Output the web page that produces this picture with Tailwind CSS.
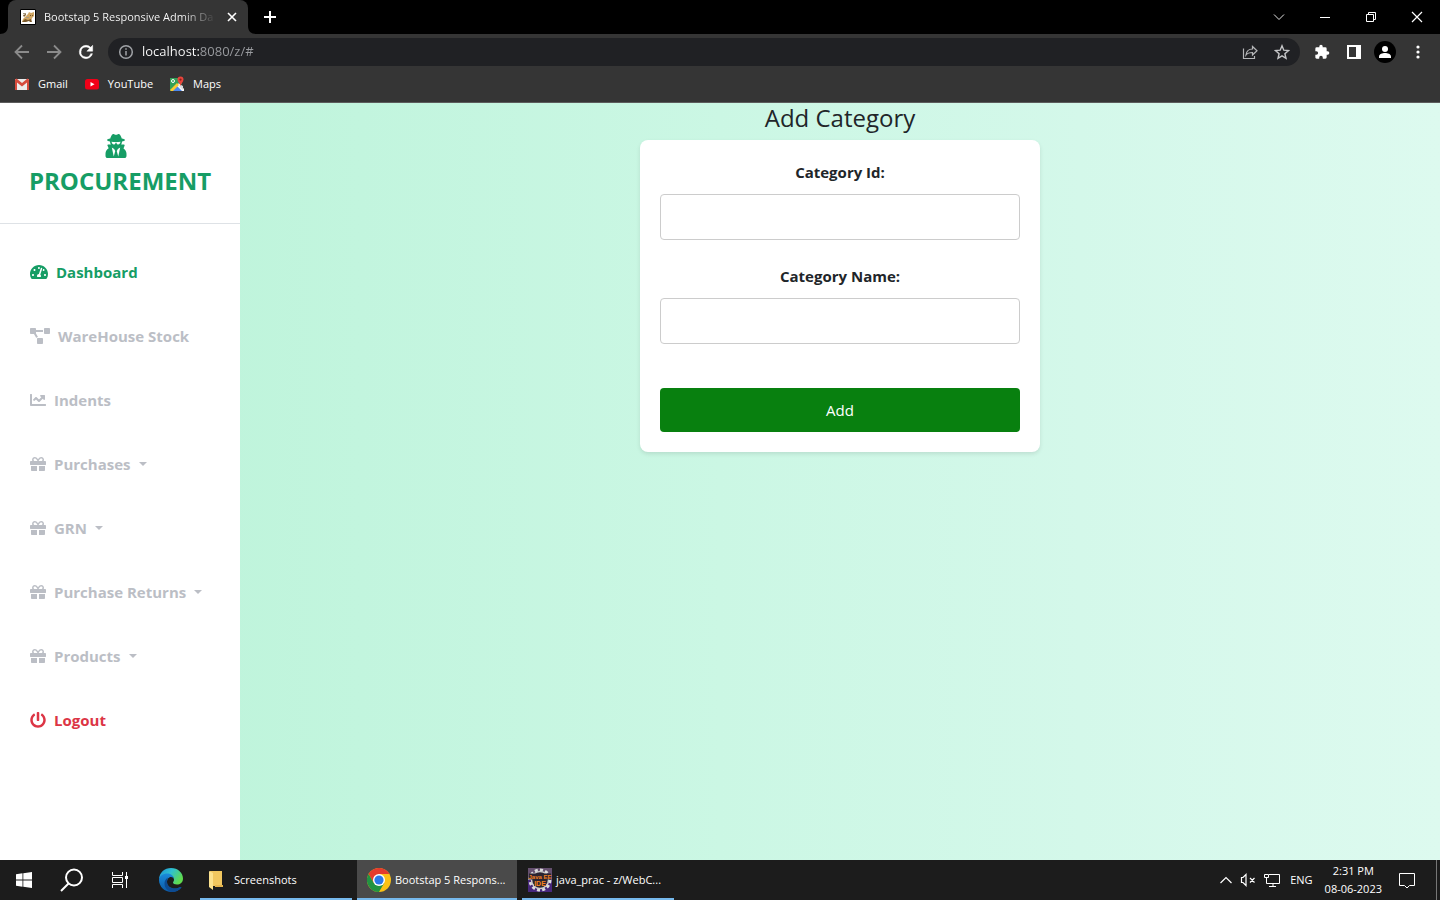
<!DOCTYPE html>
<html lang="en">
<head>
<meta charset="utf-8">
<meta name="viewport" content="width=device-width, initial-scale=1">
<title>Bootstap 5 Responsive Admin Dashboard</title>
<script src="https://cdn.jsdelivr.net/npm/@tailwindcss/browser@4"></script>
</head>
<body class="min-h-screen flex flex-col bg-white font-['Segoe_UI','Open_Sans',sans-serif] text-[#212529]">

<svg class="hidden" aria-hidden="true">
  <symbol id="gift" viewBox="0 0 512 512"><path fill="currentColor" d="M32 448c0 17.700 14.300 32 32 32h160V320H32v128zm256 32h160c17.700 0 32-14.300 32-32V320H288v160zm192-320h-42.100c6.200-12.100 10.100-25.500 10.100-40 0-48.500-39.500-88-88-88-41.600 0-68.500 21.300-103 68.300-34.500-47-61.400-68.300-103-68.300-48.500 0-88 39.500-88 88 0 14.500 3.800 27.900 10.100 40H32c-17.700 0-32 14.300-32 32v80c0 8.800 7.200 16 16 16h480c8.800 0 16-7.200 16-16v-80c0-17.700-14.300-32-32-32zm-326.100 0c-22.100 0-40-17.900-40-40s17.900-40 40-40c19.900 0 34.600 3.300 86.100 80h-86.100zm206.100 0h-86.100c51.400-76.500 65.700-80 86.100-80 22.100 0 40 17.900 40 40s-17.900 40-40 40z"/></symbol>
  <symbol id="caret" viewBox="0 0 8 4"><path fill="currentColor" d="M0 0h8L4 4z"/></symbol>
</svg>

<!-- Browser window -->
<header class="text-xs text-white bg-[#353535] border-b border-[#5c5c5c]">
  <div class="h-[34px] bg-black flex items-center justify-between">
    <div class="flex items-center h-full">
      <svg class="w-2 h-2 self-end" viewBox="0 0 8 8"><path fill="#353535" d="M8 0v8H0c5 0 8-3 8-8z"/></svg>
      <div class="w-60 h-full bg-[#353535] rounded-t-lg flex items-center pl-3 pr-2">
        <svg class="w-4 h-4 shrink-0" viewBox="0 0 16 16"><path fill="#fff" stroke="#000" d="M.5.5h15v15H.5z"/><path fill="#d2a763" d="M8 5l1-2 2 1 3-1v4l-2 2-1 3H6l-3 1H2l1-3 2-2z"/><path fill="#7b5a2c" d="M2 13l3-3 3 1 3-1 1 3h-2l-1-1-3 1zM10 6h1v1h-1zM12 6h1v1h-1zM3 6l3-1v1L4 8z"/><path fill="#a89b84" d="M3 4h3v1H3zM6 8h3v1H6z"/></svg>
        <span class="ml-2 w-44 whitespace-nowrap text-[11px] bg-linear-to-r from-white from-80% to-transparent bg-clip-text text-transparent">Bootstap 5 Responsive Admin Da</span>
        <button aria-label="Close tab" class="ml-2 shrink-0"><svg class="w-4 h-4" viewBox="0 0 16 16" stroke="#fff" stroke-width="1.600"><path d="M4 4l8 8M12 4l-8 8"/></svg></button>
      </div>
      <svg class="w-2 h-2 self-end" viewBox="0 0 8 8"><path fill="#353535" d="M0 0v8h8C3 8 0 5 0 0z"/></svg>
      <button aria-label="New tab" class="ml-1.5"><svg class="w-4 h-4" viewBox="0 0 16 16" stroke="#fff" stroke-width="2"><path d="M8 2v12M2 8h12"/></svg></button>
    </div>
    <div class="flex items-center h-7">
      <button aria-label="Search tabs" class="w-[46px] flex justify-center"><svg class="w-3 h-3" viewBox="0 0 12 12" fill="none" stroke="#e4e4e4"><path d="M1 3.500l5 5 5-5"/></svg></button>
      <button aria-label="Minimize" class="w-[46px] flex justify-center"><svg class="w-3 h-3" viewBox="0 0 12 12" stroke="#fff"><path d="M1 6.500h10"/></svg></button>
      <button aria-label="Restore" class="w-[46px] flex justify-center"><svg class="w-3 h-3" viewBox="0 0 12 12" fill="none" stroke="#fff"><path d="M1.500 3.500h7v7h-7zM3.500 3.500v-2h7v7h-2"/></svg></button>
      <button aria-label="Close" class="w-[46px] flex justify-center"><svg class="w-3 h-3" viewBox="0 0 12 12" stroke="#fff" stroke-width="1.200"><path d="M1 1l10 10M11 1L1 11"/></svg></button>
    </div>
  </div>

  <div class="h-9 flex items-center pl-3 pr-3.5">
    <div class="flex gap-3">
      <button aria-label="Back"><svg class="w-5 h-5" viewBox="0 0 20 20" fill="none" stroke="#8b8b8b" stroke-width="1.800"><path d="M17 10H4M10 3.500L3.500 10l6.500 6.500"/></svg></button>
      <button aria-label="Forward"><svg class="w-5 h-5" viewBox="0 0 20 20" fill="none" stroke="#8b8b8b" stroke-width="1.800"><path d="M3 10h13M10 3.500l6.500 6.500-6.500 6.500"/></svg></button>
      <button aria-label="Reload"><svg class="w-5 h-5" viewBox="0 0 24 24" fill="#fff" stroke="#fff" stroke-width=".6"><path d="M17.650 6.350A7.960 7.960 0 0 0 12 4a8 8 0 1 0 7.730 10h-2.080A6 6 0 1 1 12 6c1.660 0 3.140.69 4.220 1.780L13 11h7V4z"/></svg></button>
    </div>
    <div class="ml-3 flex-1 h-7 rounded-full bg-[#202124] flex items-center pl-2.5 pr-2.5">
      <svg class="w-4 h-4" viewBox="0 0 16 16" fill="none" stroke="#a0a3a7" stroke-width="1.500"><circle cx="8" cy="8" r="6.300"/><path d="M8 7v4.500M8 4.300v1.500"/></svg>
      <input aria-label="Address" type="text" value="localhost:8080/z/#" class="ml-2 flex-1 text-[13px] outline-none bg-[linear-gradient(to_right,#fff_58px,#9a9ca0_58px)] bg-clip-text text-transparent">
      <button aria-label="Share"><svg class="w-4 h-4" viewBox="0 0 16 16" fill="none" stroke="#b5b6b8" stroke-width="1.200"><path d="M1.500 4.500v10h11v-2.500M4 11c.5-4 3-6 6.500-6V2.500L15 6.800 10.500 11V8.500C8 8.500 5.500 9 4 11z"/></svg></button>
      <button aria-label="Bookmark this page" class="ml-4"><svg class="w-4 h-4" viewBox="0 0 16 16" fill="none" stroke="#c4c5c7" stroke-width="1.400"><path d="M8 1.800l1.800 4.400 4.700.4-3.600 3.100 1.100 4.600L8 11.800l-4 2.500 1.100-4.600L1.500 6.600l4.700-.4z"/></svg></button>
    </div>
    <div class="flex items-center ml-3.5">
      <button aria-label="Extensions"><svg class="w-4 h-4" viewBox="0 0 24 24" fill="#fff"><path d="M20.500 11H19V7a2 2 0 0 0-2-2h-4V3.500a2.500 2.500 0 0 0-5 0V5H4a2 2 0 0 0-2 2v3.800h1.500a2.700 2.700 0 0 1 0 5.400H2V20c0 1.100.9 2 2 2h3.800v-1.500a2.700 2.700 0 0 1 5.400 0V22H17a2 2 0 0 0 2-2v-4h1.500a2.500 2.500 0 0 0 0-5z"/></svg></button>
      <button aria-label="Side panel" class="ml-4"><svg class="w-4 h-4" viewBox="0 0 16 16"><path fill="#fff" fill-rule="evenodd" d="M1 1h14v14H1zm2 2v10h7V3z"/></svg></button>
      <button aria-label="Profile" class="ml-3 w-[22px] h-[22px] rounded-full bg-black flex items-center justify-center"><svg class="w-4 h-4" viewBox="0 0 16 16" fill="#fff"><circle cx="8" cy="5" r="3"/><path d="M2 14v-1.500C2 10 5.500 9 8 9s6 1 6 3.500V14z"/></svg></button>
      <button aria-label="Menu" class="ml-3.5"><svg class="w-4 h-4" viewBox="0 0 16 16" fill="#fff"><circle cx="8" cy="3" r="1.600"/><circle cx="8" cy="8" r="1.600"/><circle cx="8" cy="13" r="1.600"/></svg></button>
    </div>
  </div>

  <nav aria-label="Bookmarks" class="h-8 pb-1 flex items-center gap-4 pl-3.5 text-[11px]">
    <a href="#" class="flex items-center gap-2"><svg class="w-4 h-4" viewBox="0 0 16 16"><path fill="#ececec" d="M1 3h14v11H1z"/><path fill="#d54b3d" d="M1 14H3V6.500l5 4 5-4V14h2V3.500L13.500 2.500 8 7 2.500 2.500 1 3.500z"/></svg>Gmail</a>
    <a href="#" class="flex items-center gap-2"><svg class="w-4 h-4" viewBox="0 0 16 16"><rect x="1" y="3" width="14" height="10.500" rx="2.500" fill="#f00018"/><path fill="#fff" d="M6.500 6v4.500l4-2.250z"/></svg>YouTube</a>
    <a href="#" class="flex items-center gap-2"><svg class="w-4 h-4" viewBox="0 0 16 16"><path fill="#34a058" d="M1 2h12v6L2 15H1z"/><path fill="#f7f7f7" d="M3 15l7-8 5 6v2z"/><path fill="#4b87ee" d="M3 15l5-5 5 5z"/><path fill="#fbc931" d="M1 14l7-7 2 2-6 6H2z"/><path fill="#d9dde0" d="M12 9l2 1v4l-4-4z"/><circle cx="4" cy="5" r="1.500" fill="none" stroke="#fff"/><path fill="#e8453c" d="M11.500 10C11 7.500 8.500 6 8.500 3.500a3 3 0 0 1 6 0C14.500 6 12 7.500 11.500 10z"/><circle cx="11.500" cy="3.600" r="1.100" fill="#8c1d18"/></svg>Maps</a>
  </nav>
</header>

<!-- Page -->
<div class="flex-1 flex bg-[linear-gradient(to_right,#baf3d7,#c2f5de,#cbf7e4,#d4f8ea,#ddfaef)]">
  <aside class="w-60 shrink-0 bg-white">
    <div class="py-6 border-b border-[#dee2e6] text-[#169d65] text-2xl leading-9 font-bold flex flex-col items-center">
      <div class="h-9 flex items-center pr-2 pt-0.5"><svg class="h-6 w-[22px]" viewBox="0 0 448 512"><path fill="currentColor" d="M383.900 308.300l23.900-62.600c4-10.500-3.700-21.700-15-21.700h-58.500c11-18.900 17.800-40.600 17.800-64v-.3c39.200-7.800 64-19.100 64-31.700 0-13.300-27.300-25.100-70.100-33-9.200-32.800-27-65.800-40.600-82.800-9.500-11.900-25.900-15.600-39.500-8.800l-27.600 13.800c-9 4.500-19.600 4.500-28.600 0L182.100 3.400c-13.600-6.800-30-3.100-39.500 8.800-13.500 17-31.400 50-40.600 82.800-42.700 7.900-70 19.700-70 33 0 12.600 24.800 23.900 64 31.700v.3c0 23.400 6.800 45.100 17.800 64H56.300c-11.500 0-19.200 11.700-14.700 22.300l25.800 60.200C27.300 329.800 0 372.700 0 422.400v44.800C0 491.900 20.100 512 44.800 512h358.400c24.700 0 44.800-20.100 44.800-44.800v-44.800c0-48.400-25.800-90.400-64.100-114.100zM176 480l-41.600-192 49.600 32 24 40-32 120zm96 0l-32-120 24-40 49.600-32L272 480zm41.700-298.500c-3.900 11.900-7 24.600-16.500 33.400-10.100 9.300-48 22.400-64-25-2.800-8.400-15.400-8.400-18.300 0-17 50.200-56 32.400-64 25-9.500-8.800-12.700-21.500-16.500-33.400-.8-2.500-6.300-5.700-6.300-5.800v-10.800c28.300 3.600 61 5.800 96 5.800s67.700-2.100 96-5.800v10.800c-.1.100-5.600 3.200-6.400 5.800z"/></svg></div>
      <span>PROCUREMENT</span>
    </div>
    <nav aria-label="Main" class="my-4 text-[15px] font-bold text-[#bbbec5]">
      <a href="#" class="h-16 px-[30px] flex items-center gap-2 text-[#169d65]"><svg class="h-4 w-[18px]" viewBox="0 0 576 512"><path fill="currentColor" d="M288 32C128.940 32 0 160.940 0 320c0 52.800 14.250 102.260 39.060 144.800 5.610 9.620 16.300 15.200 27.440 15.200h443c11.140 0 21.830-5.580 27.440-15.200C561.750 422.260 576 372.800 576 320c0-159.060-128.940-288-288-288zm0 64c14.710 0 26.580 10.130 30.320 23.650-1.110 2.260-2.640 4.230-3.450 6.670l-9.220 27.670c-5.130 3.490-10.970 6.010-17.640 6.010-17.670 0-32-14.330-32-32S270.330 96 288 96zM96 384c-17.670 0-32-14.330-32-32s14.330-32 32-32 32 14.330 32 32-14.330 32-32 32zm48-160c-17.670 0-32-14.330-32-32s14.330-32 32-32 32 14.330 32 32-14.330 32-32 32zm246.770-72.410l-61.330 184C343.130 347.330 352 364.540 352 384c0 11.720-3.380 22.550-8.880 32H232.880c-5.500-9.450-8.880-20.280-8.880-32 0-33.940 26.500-61.430 59.900-63.590l61.340-184.010c4.170-12.560 17.730-19.450 30.360-15.170 12.570 4.190 19.350 17.790 15.170 30.360zm14.660 57.200l15.520-46.550c3.470-1.290 7.130-2.230 11.050-2.230 17.670 0 32 14.330 32 32s-14.330 32-32 32c-11.380-.01-21.280-6.060-26.570-15.210zM480 384c-17.670 0-32-14.330-32-32s14.330-32 32-32 32 14.330 32 32-14.330 32-32 32z"/></svg>Dashboard</a>
      <a href="#" class="h-16 px-[30px] flex items-center gap-2"><svg class="h-4 w-5" viewBox="0 0 640 512"><path fill="currentColor" d="M384 320H256c-17.670 0-32 14.330-32 32v128c0 17.670 14.330 32 32 32h128c17.670 0 32-14.330 32-32V352c0-17.670-14.330-32-32-32zM192 32c0-17.670-14.330-32-32-32H32C14.330 0 0 14.330 0 32v128c0 17.670 14.330 32 32 32h95.720l73.160 128.040C211.980 300.980 232.400 288 256 288h.28L192 175.510V128h224V64H192V32zM608 0H480c-17.670 0-32 14.330-32 32v128c0 17.670 14.330 32 32 32h128c17.670 0 32-14.330 32-32V32c0-17.670-14.330-32-32-32z"/></svg>WareHouse Stock</a>
      <a href="#" class="h-16 px-[30px] flex items-center gap-2"><svg class="h-4 w-4" viewBox="0 0 512 512"><path fill="currentColor" d="M496 384H64V80c0-8.840-7.160-16-16-16H16C7.160 64 0 71.160 0 80v336c0 17.670 14.330 32 32 32h464c8.840 0 16-7.160 16-16v-32c0-8.840-7.160-16-16-16zM464 96H345.940c-21.380 0-32.090 25.850-16.970 40.970l32.400 32.400L288 242.750l-73.370-73.370c-12.500-12.500-32.760-12.500-45.250 0l-68.690 68.690c-6.250 6.250-6.250 16.380 0 22.630l22.620 22.620c6.250 6.250 16.380 6.250 22.630 0L192 237.250l73.370 73.370c12.500 12.500 32.760 12.500 45.250 0l96-96 32.400 32.400c15.120 15.120 40.970 4.410 40.970-16.970V112c.01-8.840-7.150-16-15.990-16z"/></svg>Indents</a>
      <a href="#" class="h-16 px-[30px] flex items-center gap-2"><svg class="h-4 w-4"><use href="#gift"/></svg>Purchases<svg class="w-2 h-1"><use href="#caret"/></svg></a>
      <a href="#" class="h-16 px-[30px] flex items-center gap-2"><svg class="h-4 w-4"><use href="#gift"/></svg>GRN<svg class="w-2 h-1"><use href="#caret"/></svg></a>
      <a href="#" class="h-16 px-[30px] flex items-center gap-2"><svg class="h-4 w-4"><use href="#gift"/></svg>Purchase Returns<svg class="w-2 h-1"><use href="#caret"/></svg></a>
      <a href="#" class="h-16 px-[30px] flex items-center gap-2"><svg class="h-4 w-4"><use href="#gift"/></svg>Products<svg class="w-2 h-1"><use href="#caret"/></svg></a>
      <a href="#" class="h-16 px-[30px] flex items-center gap-2 text-[#dc3545]"><svg class="h-4 w-4" viewBox="0 0 512 512"><path fill="currentColor" d="M400 54.100c63 45 104 118.600 104 201.900 0 136.800-110.800 247.700-247.500 248C120 504.300 8.200 393 8 256.400 7.900 173.100 48.900 99.300 111.800 54.200c11.700-8.300 28-4.800 35 7.700L162.600 90c5.900 10.500 3.100 23.800-6.600 31-41.500 30.800-68 79.600-68 134.900-.1 92.300 74.500 168.100 168 168.100 91.600 0 168.600-74.200 168-169.100-.3-51.800-24.700-101.800-68.100-134-9.700-7.200-12.400-20.500-6.500-30.900l15.800-28.100c7-12.400 23.200-16.100 34.800-7.800zM296 264V24c0-13.300-10.700-24-24-24h-32c-13.300 0-24 10.700-24 24v240c0 13.300 10.700 24 24 24h32c13.300 0 24-10.700 24-24z"/></svg>Logout</a>
    </nav>
  </aside>

  <main class="flex-1 flex flex-col items-center">
    <h2 class="text-2xl leading-[29px] font-medium mb-2">Add Category</h2>
    <form class="w-full max-w-[400px] bg-white rounded-lg p-5 shadow-[0_2px_4px_rgba(0,0,0,0.1)] flex flex-col text-center text-[15px]">
      <label for="category-id" class="font-bold leading-6 mb-2.5">Category Id:</label>
      <input id="category-id" type="text" class="h-[46px] px-2.5 border border-[#ccc] rounded bg-white mb-6">
      <label for="category-name" class="font-bold leading-6 mb-2.5">Category Name:</label>
      <input id="category-name" type="text" class="h-[46px] px-2.5 border border-[#ccc] rounded bg-white mb-11">
      <button type="button" class="h-11 rounded bg-[#08800f] text-white">Add</button>
    </form>
  </main>
</div>

<!-- Taskbar -->
<footer class="h-10 bg-[#1c1c1c] text-white text-[11px] flex items-stretch justify-between">
  <div class="flex">
    <button aria-label="Start" class="w-12 flex items-center justify-center"><svg class="w-4 h-4" viewBox="0 0 16 16" fill="#fff"><path d="M0 2.300L6.500 1.300V7.500H0zM7.300 1.200L16 0v7.500H7.300zM0 8.400h6.500v6.300L0 13.700zM7.300 8.400H16V16l-8.700-1.200z"/></svg></button>
    <button aria-label="Search" class="w-12 flex items-center justify-center"><svg class="w-6 h-6" viewBox="0 0 24 24" fill="none" stroke="#fff" stroke-width="2"><circle cx="14" cy="9.500" r="8"/><path d="M8.500 15.500L1 23"/></svg></button>
    <button aria-label="Task view" class="w-12 flex items-center justify-center"><svg class="w-4 h-4" viewBox="0 0 16 16" fill="none" stroke="#fff"><path d="M.5 0v3.500h10V0M.5 16v-3.500h10V16M.5 5.500h10v5H.5zM14.500 0v4M14.500 7v9"/><path fill="#fff" stroke="none" d="M13 4h3v3h-3z"/></svg></button>
    <button aria-label="Edge" class="w-14 pr-0.5 flex items-center justify-center"><svg class="w-6 h-6" viewBox="0 0 24 24"><defs><linearGradient id="edgeTop" x1="0" y1="0" x2="1" y2=".5"><stop offset="0" stop-color="#1b8fd8"/><stop offset=".5" stop-color="#2fc1d0"/><stop offset="1" stop-color="#5fdb4e"/></linearGradient><linearGradient id="edgeLow" x1="0" y1="0" x2="0" y2="1"><stop offset="0" stop-color="#1a8bdc"/><stop offset="1" stop-color="#0c59a4"/></linearGradient></defs><path fill="url(#edgeTop)" d="M0 11C.5 4.500 5.500 0 12 0c7 0 12 5 12 10.500 0 4-3 6-6 6-2.500 0-4-1-4-2 0-.6 1-1.200 1-2.700C15 9 12.500 7 9 7 5 7 1.500 8.500 0 11z"/><path fill="url(#edgeLow)" d="M0 12c0-4 4-6.500 8.500-6.500 3.500 0 6.500 2.500 6.500 6 0-1.500-1.500-2.500-3-2.500-2.500 0-4 2.500-4 5 0 4 3.500 6.500 8 6.500 2 0 4-.6 5.500-1.500.5-.3 1 .2.700.7C20 22.500 16.500 24 12.500 24 5.500 24 0 18.500 0 12z"/><path fill="#0d4b92" d="M9 9.500C6.500 11 5.500 13 5.500 15.500c0 4.500 3.500 8 7.500 8.500 4-.2 7.200-1.800 9.200-4.300.3-.5-.2-1-.7-.7-1.500.9-3.500 1.500-5.500 1.500-4.500 0-8-2.500-8-6.500 0-1.700.4-3.300 1-4.500z"/></svg></button>
    <button class="w-[152px] border-b-2 border-[#76b9ed] flex items-center gap-1.5 pl-1 pt-0.5"><svg class="w-6 h-6" viewBox="0 0 24 24"><path fill="#f1c75f" d="M6 3h12v15H6z"/><path fill="#e4b44d" d="M11 17h8v2h-8z"/><path fill="#fce28e" d="M5 3l4 2v17l-4-3z"/></svg><span>Screenshots</span></button>
    <button class="ml-[5px] w-40 border-b-2 border-[#76b9ed] bg-[#4a4a4a] flex items-center gap-1 pl-2.5 pt-0.5 whitespace-nowrap"><svg class="w-6 h-6 shrink-0" viewBox="0 0 24 24"><circle cx="12" cy="12" r="12" fill="#fbc116"/><path fill="#e33b2e" d="M1.600 6A12 12 0 0 1 22.400 6H12v6l-5.200 3z"/><path fill="#229342" d="M1.600 6A12 12 0 0 0 12 24l5.200-9L12 12l-5.200 3z"/><circle cx="12" cy="12" r="6" fill="#fff"/><circle cx="12" cy="12" r="4.600" fill="#2a78e8"/></svg><span>Bootstap 5 Respons...</span></button>
    <button class="ml-[5px] w-[152px] border-b-2 border-[#76b9ed] flex items-center gap-1 pl-1.5 pt-0.5 whitespace-nowrap"><svg class="w-6 h-6 shrink-0" viewBox="0 0 24 24"><path fill="#65506f" d="M0 0h24v12H0z"/><path fill="#47277c" d="M0 12h24v12H0z"/><circle cx="12" cy="12" r="10" fill="none" stroke="#ddd" stroke-width="3" stroke-dasharray="3 2.200"/><circle cx="12" cy="12" r="8.500" fill="#2b2430" stroke="#ccc" stroke-width="1.500"/><path fill="#2b2430" d="M1 5.500h22v6H1zM6 12h12v6H6z"/><text x="12" y="11" text-anchor="middle" font-family="Liberation Sans" font-weight="700" font-size="6" fill="#f5821f">Java EE</text><text x="12" y="17.500" text-anchor="middle" font-family="Liberation Sans" font-weight="700" font-size="7" fill="#f5821f">IDE</text></svg><span>java_prac - z/WebC...</span></button>
  </div>
  <div class="flex items-center">
    <button aria-label="Show hidden icons"><svg class="w-3 h-3" viewBox="0 0 12 12" fill="none" stroke="#fff" stroke-width="1.200"><path d="M.5 9L6 3.500 11.500 9"/></svg></button>
    <svg class="ml-2 w-4 h-4" viewBox="0 0 16 16" fill="none" stroke="#fff"><path d="M1.500 5.500H3l3-3v11l-3-3H1.500zM10 6l4.500 4.500M14.500 6L10 10.500" stroke-width="1.200"/></svg>
    <svg class="ml-2 w-4 h-4" viewBox="0 0 16 16" fill="none" stroke="#fff"><path d="M5 2.500h10.500v9H2.500V7M9 11.500v3M5 14.500h7M.5 2.500h4v3h-4zM2.500 5.500v2"/></svg>
    <span class="ml-2.5">ENG</span>
    <div class="ml-3 text-center leading-[18px]"><div>2:31 PM</div><div>08-06-2023</div></div>
    <button aria-label="Notifications" class="ml-4"><svg class="w-[18px] h-[18px]" viewBox="0 0 18 18" fill="none" stroke="#fff"><path d="M1.500 2.500h15v12h-5L9 17l-2.500-2.500h-5z"/></svg></button>
    <div class="ml-5 w-1 h-full border-l border-[#777]"></div>
  </div>
</footer>
</body>
</html>
